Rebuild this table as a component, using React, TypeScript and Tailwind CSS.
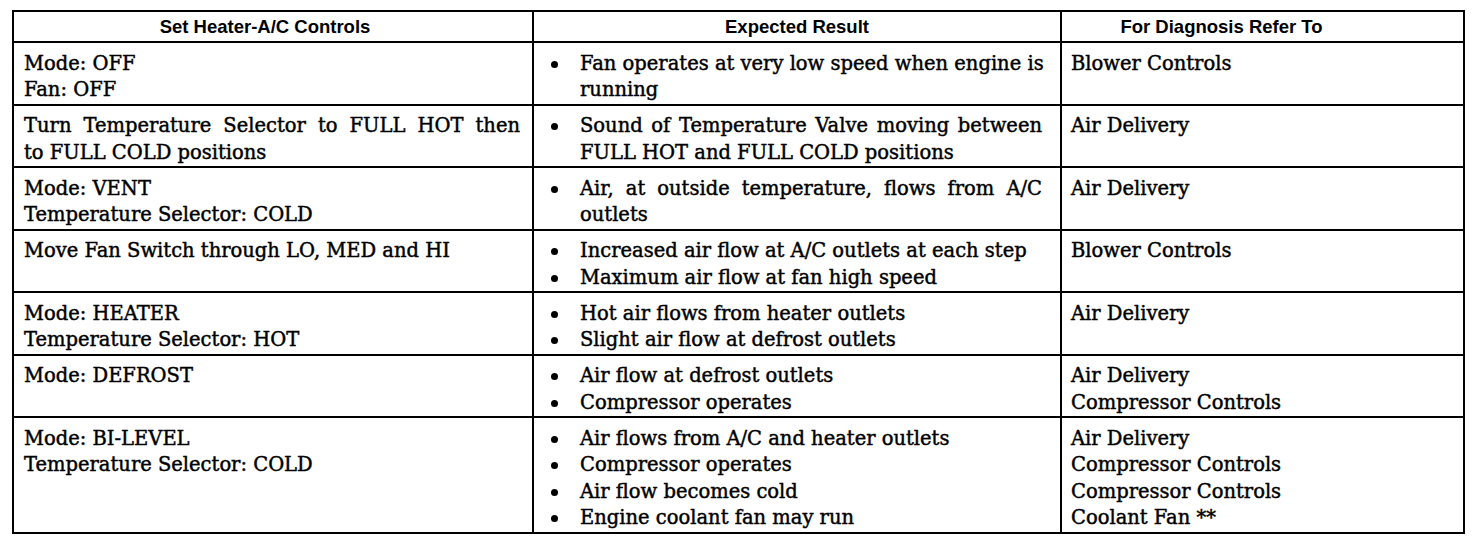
import React from 'react';

type Row = {
    controls: { text: string; justify?: boolean }[];
    results: { text: string; justify?: boolean }[][];
    refer: string[];
};

const rows: Row[] = [
    {
        controls: [{ text: 'Mode: OFF' }, { text: 'Fan: OFF' }],
        results: [[{ text: 'Fan operates at very low speed when engine is', justify: true }, { text: 'running' }]],
        refer: ['Blower Controls'],
    },
    {
        controls: [{ text: 'Turn Temperature Selector to FULL HOT then', justify: true }, { text: 'to FULL COLD positions' }],
        results: [[{ text: 'Sound of Temperature Valve moving between', justify: true }, { text: 'FULL HOT and FULL COLD positions' }]],
        refer: ['Air Delivery'],
    },
    {
        controls: [{ text: 'Mode: VENT' }, { text: 'Temperature Selector: COLD' }],
        results: [[{ text: 'Air, at outside temperature, flows from A/C', justify: true }, { text: 'outlets' }]],
        refer: ['Air Delivery'],
    },
    {
        controls: [{ text: 'Move Fan Switch through LO, MED and HI' }],
        results: [[{ text: 'Increased air flow at A/C outlets at each step' }], [{ text: 'Maximum air flow at fan high speed' }]],
        refer: ['Blower Controls'],
    },
    {
        controls: [{ text: 'Mode: HEATER' }, { text: 'Temperature Selector: HOT' }],
        results: [[{ text: 'Hot air flows from heater outlets' }], [{ text: 'Slight air flow at defrost outlets' }]],
        refer: ['Air Delivery'],
    },
    {
        controls: [{ text: 'Mode: DEFROST' }],
        results: [[{ text: 'Air flow at defrost outlets' }], [{ text: 'Compressor operates' }]],
        refer: ['Air Delivery', 'Compressor Controls'],
    },
    {
        controls: [{ text: 'Mode: BI-LEVEL' }, { text: 'Temperature Selector: COLD' }],
        results: [
            [{ text: 'Air flows from A/C and heater outlets' }],
            [{ text: 'Compressor operates' }],
            [{ text: 'Air flow becomes cold' }],
            [{ text: 'Engine coolant fan may run' }],
        ],
        refer: ['Air Delivery', 'Compressor Controls', 'Compressor Controls', 'Coolant Fan **'],
    },
];

function Line({ text, justify }: { text: string; justify?: boolean }) {
    return (
        <div className={`whitespace-nowrap ${justify ? 'text-justify [text-align-last:justify]' : ''}`}>{text}</div>
    );
}

export default function App() {
    return (
        <div className="w-[1472px] h-[540px] bg-white pt-[10px] pl-[12px]">
            <table
                className="border-collapse border-2 border-black text-black table-fixed w-[1451px]"
                style={{ fontFamily: '"DejaVu Serif", serif' }}
            >
                <colgroup>
                    <col className="w-[520px]" />
                    <col className="w-[528px]" />
                    <col className="w-[403px]" />
                </colgroup>
                <thead>
                    <tr className="h-[31px] font-['Liberation_Sans',Arial,sans-serif] font-bold text-[18.5px]">
                        <th className="border-2 border-black text-center pr-[16px] font-bold">Set Heater-A/C Controls</th>
                        <th className="border-2 border-black text-center font-bold">Expected Result</th>
                        <th className="border-2 border-black text-center pr-[82px] font-bold">For Diagnosis Refer To</th>
                    </tr>
                </thead>
                <tbody className="text-[19.5px] leading-[26.5px] [-webkit-text-stroke:0.45px_black]">
                    {rows.map((row, i) => (
                        <tr key={i}>
                            <td className="border-2 border-black align-top pl-[10px] pr-[12px] pt-[7.5px] pb-0">
                                {row.controls.map((l, j) => (
                                    <Line key={j} text={l.text} justify={l.justify} />
                                ))}
                            </td>
                            <td className="border-2 border-black align-top pl-[17px] pr-[18px] pt-[7.5px] pb-0">
                                {row.results.map((item, j) => (
                                    <div key={j} className="flex">
                                        <div className="w-[29px] shrink-0 pt-[10px]">
                                            <div className="w-[7px] h-[7px] rounded-full bg-black" />
                                        </div>
                                        <div className="flex-1">
                                            {item.map((l, k) => (
                                                <Line key={k} text={l.text} justify={l.justify} />
                                            ))}
                                        </div>
                                    </div>
                                ))}
                            </td>
                            <td className="border-2 border-black align-top pl-[9px] pt-[7.5px] pb-0">
                                {row.refer.map((t, j) => (
                                    <div key={j}>{t}</div>
                                ))}
                            </td>
                        </tr>
                    ))}
                </tbody>
            </table>
        </div>
    );
}
